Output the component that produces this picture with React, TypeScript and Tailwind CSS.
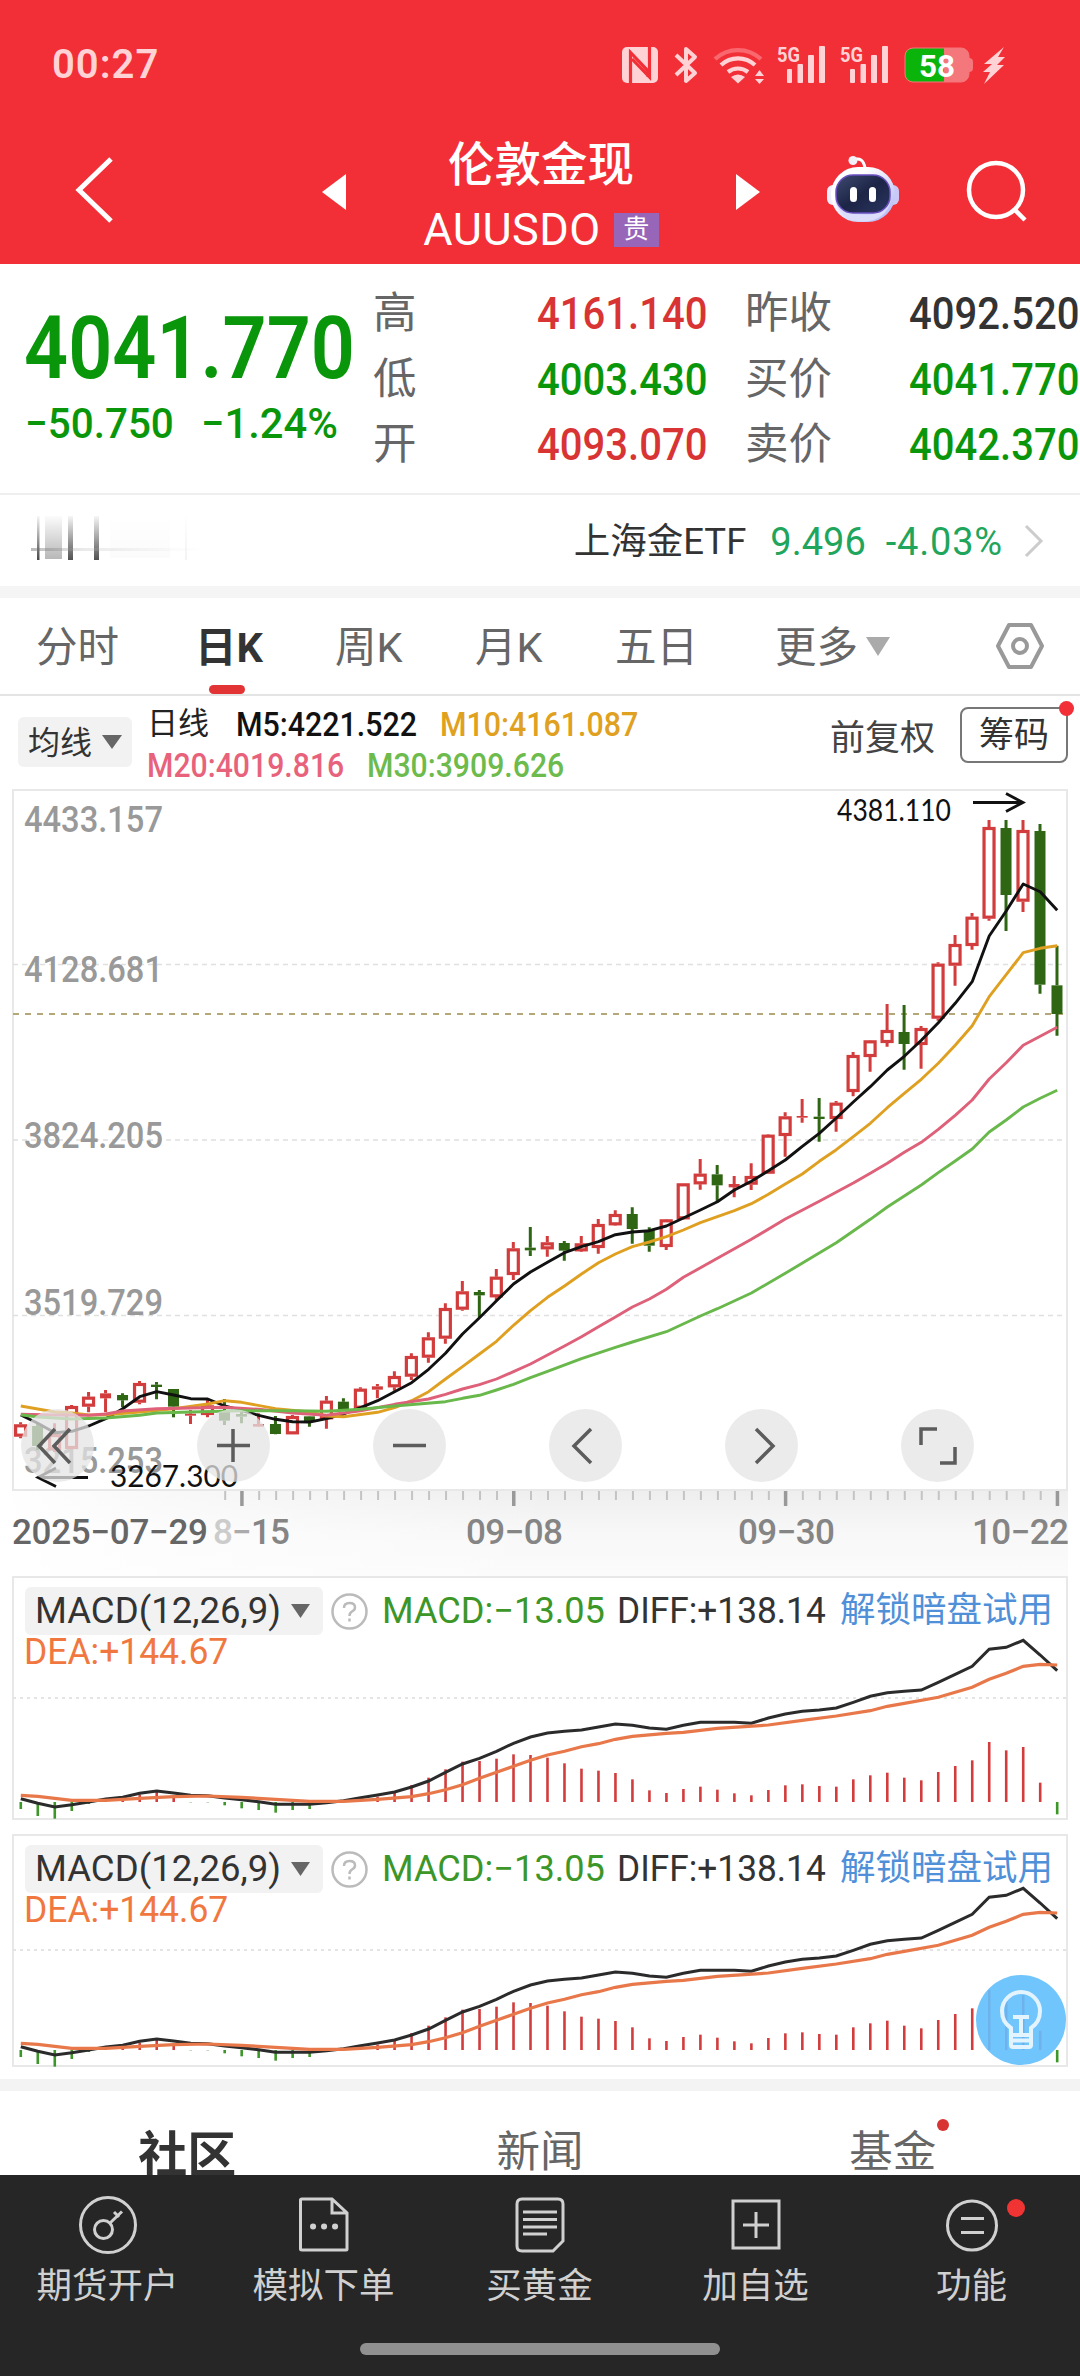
import React from "react";

type Candle = [string, number, number, number, number];

// direction, high, body top, body bottom, low (3 units = 1px)
const candles: Candle[] = [
  ["r", 1927, 1933, 1970, 1975],
  ["g", 1932, 1938, 1998, 2010],
  ["r", 1930, 1962, 2010, 2016],
  ["r", 1875, 1878, 2007, 2008],
  ["r", 1836, 1850, 1880, 1897],
  ["r", 1830, 1840, 1855, 1897],
  ["g", 1840, 1845, 1861, 1882],
  ["r", 1803, 1809, 1868, 1873],
  ["g", 1806, 1814, 1821, 1858],
  ["g", 1827, 1827, 1880, 1912],
  ["r", 1890, 1901, 1907, 1932],
  ["r", 1855, 1876, 1905, 1912],
  ["g", 1857, 1890, 1922, 1935],
  ["g", 1890, 1902, 1910, 1930],
  ["r", 1900, 1932, 1940, 1941],
  ["g", 1908, 1932, 1962, 1963],
  ["r", 1905, 1908, 1963, 1963],
  ["g", 1908, 1909, 1923, 1940],
  ["r", 1848, 1862, 1918, 1946],
  ["g", 1855, 1865, 1890, 1891],
  ["r", 1822, 1826, 1886, 1890],
  ["r", 1812, 1819, 1829, 1855],
  ["r", 1774, 1788, 1822, 1832],
  ["r", 1720, 1728, 1790, 1800],
  ["r", 1657, 1672, 1733, 1748],
  ["r", 1570, 1584, 1676, 1691],
  ["r", 1503, 1534, 1589, 1592],
  ["g", 1530, 1536, 1546, 1612],
  ["r", 1467, 1490, 1552, 1562],
  ["r", 1386, 1405, 1485, 1500],
  ["g", 1341, 1403, 1411, 1428],
  ["r", 1368, 1387, 1408, 1430],
  ["g", 1383, 1389, 1412, 1442],
  ["r", 1368, 1390, 1414, 1416],
  ["r", 1317, 1332, 1404, 1421],
  ["r", 1291, 1302, 1336, 1337],
  ["g", 1282, 1302, 1347, 1391],
  ["g", 1342, 1350, 1397, 1415],
  ["r", 1317, 1318, 1401, 1410],
  ["r", 1210, 1210, 1318, 1319],
  ["r", 1137, 1181, 1213, 1229],
  ["g", 1155, 1183, 1216, 1264],
  ["r", 1188, 1212, 1222, 1252],
  ["r", 1150, 1188, 1214, 1230],
  ["r", 1063, 1064, 1181, 1182],
  ["r", 997, 1009, 1068, 1130],
  ["r", 957, 1008, 1013, 1028],
  ["g", 954, 1010, 1017, 1085],
  ["r", 963, 968, 1017, 1055],
  ["r", 816, 825, 936, 949],
  ["r", 780, 781, 831, 875],
  ["r", 672, 750, 789, 800],
  ["g", 675, 756, 792, 869],
  ["r", 738, 744, 795, 866],
  ["r", 547, 551, 716, 722],
  ["r", 465, 492, 557, 617],
  ["r", 399, 410, 498, 509],
  ["r", 120, 141, 416, 422],
  ["g", 120, 144, 345, 453],
  ["r", 120, 150, 365, 396],
  ["g", 132, 153, 614, 641],
  ["g", 497, 616, 702, 767],
];

type Point = [number, number];

const ma5: Point[] = [[0, 1905], [1, 1930], [2, 1958], [3, 1954], [4, 1938], [5, 1916], [6, 1886], [7, 1850], [8, 1835], [9, 1845], [10, 1856], [11, 1857], [12, 1878], [13, 1892], [14, 1906], [15, 1918], [16, 1925], [17, 1926], [18, 1916], [19, 1902], [20, 1883], [21, 1862], [22, 1835], [23, 1808], [24, 1768], [25, 1720], [26, 1662], [27, 1613], [28, 1562], [29, 1512], [30, 1476], [31, 1447], [32, 1418], [33, 1400], [34, 1385], [35, 1364], [36, 1356], [37, 1352], [38, 1338], [39, 1314], [40, 1290], [41, 1265], [42, 1230], [43, 1204], [44, 1172], [45, 1140], [46, 1099], [47, 1060], [48, 1014], [49, 966], [50, 920], [51, 870], [52, 829], [53, 781], [54, 728], [55, 670], [56, 605], [57, 468], [58, 393], [59, 312], [60, 335], [61, 391]];
const ma10: Point[] = [[0, 1878], [1, 1887], [2, 1896], [3, 1899], [4, 1905], [5, 1904], [7, 1896], [9, 1886], [11, 1872], [12, 1862], [13, 1867], [15, 1886], [17, 1896], [18, 1908], [19, 1910], [21, 1897], [22, 1883], [23, 1862], [24, 1835], [25, 1797], [26, 1760], [27, 1722], [28, 1684], [29, 1636], [30, 1592], [31, 1552], [32, 1518], [33, 1482], [34, 1448], [35, 1422], [36, 1400], [37, 1386], [38, 1370], [39, 1350], [40, 1328], [41, 1310], [42, 1292], [43, 1271], [44, 1243], [45, 1212], [46, 1182], [47, 1144], [48, 1109], [49, 1070], [50, 1030], [51, 983], [52, 940], [53, 898], [54, 850], [55, 796], [56, 737], [57, 650], [58, 584], [59, 518], [60, 505], [61, 497]];
const ma20: Point[] = [[0, 1903], [2, 1905], [4, 1906], [5, 1902], [6, 1893], [8, 1886], [10, 1884], [12, 1882], [14, 1888], [16, 1899], [18, 1906], [20, 1892], [22, 1873], [24, 1857], [25, 1843], [26, 1827], [27, 1814], [28, 1797], [29, 1775], [30, 1752], [31, 1725], [32, 1698], [33, 1670], [34, 1640], [35, 1611], [36, 1581], [37, 1557], [38, 1528], [39, 1492], [41, 1435], [43, 1378], [45, 1317], [47, 1264], [49, 1209], [50, 1180], [51, 1150], [52, 1117], [53, 1087], [54, 1048], [55, 1006], [56, 960], [57, 897], [58, 848], [59, 796], [60, 769], [61, 742]];
const ma30: Point[] = [[0, 1904], [1, 1911], [3, 1917], [5, 1914], [7, 1906], [8, 1899], [10, 1896], [13, 1892], [16, 1892], [18, 1894], [20, 1888], [22, 1878], [25, 1865], [26, 1855], [27, 1846], [28, 1830], [29, 1813], [30, 1793], [31, 1774], [33, 1736], [35, 1702], [36, 1686], [38, 1655], [40, 1608], [41, 1586], [43, 1539], [45, 1480], [48, 1388], [50, 1318], [51, 1281], [53, 1215], [54, 1178], [55, 1143], [56, 1107], [57, 1056], [58, 1020], [59, 981], [60, 955], [61, 931]];

// MACD values measured up from the zero line
const macdBars = [-21, -42, -50, -27, -6, 6, 8, 22, 30, 15, -1, -1, -10, -19, -24, -32, -24, -21, -5, 2, 9, 16, 30, 51, 73, 98, 121, 123, 130, 143, 141, 133, 116, 100, 94, 87, 68, 35, 27, 39, 46, 37, 26, 20, 36, 50, 53, 48, 46, 68, 80, 88, 73, 65, 90, 108, 125, 180, 155, 165, 58, -37];
const diff: Point[] = [[0, 10], [1, -4], [2, -15], [3, -8], [4, 0], [5, 9], [6, 14], [7, 26], [8, 33], [9, 27], [10, 20], [11, 19], [12, 12], [13, 7], [14, 1], [15, -7], [17, -7], [18, -2], [19, 4], [20, 13], [21, 21], [22, 30], [23, 45], [24, 63], [25, 89], [26, 114], [27, 131], [28, 152], [29, 176], [30, 195], [31, 207], [32, 212], [33, 216], [34, 225], [35, 234], [36, 230], [37, 222], [38, 218], [39, 230], [40, 239], [42, 239], [43, 236], [44, 252], [45, 264], [46, 272], [47, 276], [48, 282], [49, 299], [50, 317], [51, 328], [52, 332], [53, 336], [54, 359], [55, 383], [56, 407], [57, 458], [58, 464], [59, 485], [60, 441], [61, 394]];
const dea: Point[] = [[0, 20], [1, 17], [2, 11], [3, 5], [5, 5], [7, 11], [9, 16], [11, 18], [13, 14], [15, 8], [17, 2], [19, 2], [21, 8], [23, 16], [24, 25], [25, 37], [26, 52], [27, 71], [28, 89], [29, 107], [30, 125], [31, 141], [32, 152], [33, 166], [34, 175], [35, 188], [36, 197], [38, 206], [39, 209], [41, 221], [44, 231], [46, 245], [48, 258], [50, 274], [51, 287], [52, 296], [54, 314], [56, 344], [57, 368], [58, 386], [59, 407], [60, 413], [61, 411]];

const px = (i: number) => 20.8 + i * 16.99;
const line = (points: Point[]) =>
  points.map(([i, v]) => `${px(i).toFixed(1)},${(v / 3).toFixed(1)}`).join(" ");
const macdLine = (points: Point[], zero: number) =>
  points
    .map(([i, v]) => `${px(i).toFixed(1)},${(zero - v / 3).toFixed(1)}`)
    .join(" ");

const Signal = () => (
  <svg className="h-[40px] w-[50px] overflow-visible" viewBox="0 0 50 40" fill="#ffd3d5">
    <text x="0" y="16.500" fontSize="20" fontWeight="700" textLength="23" lengthAdjust="spacingAndGlyphs">
      5G
    </text>
    <rect x="10" y="24" width="5" height="14" rx="1" />
    <rect x="20.5" y="19" width="5.5" height="19" rx="1" />
    <rect x="31" y="10" width="6" height="28" rx="1" />
    <rect x="42" y="1" width="6" height="37" rx="1" />
  </svg>
);

const StatusBar = () => (
  <div className="flex h-[128px] items-center justify-between pt-px pr-[74px] pl-[52px]">
    <span className="text-[40px] font-semibold tracking-[1px] text-[#ffd3d5]">
      00:27
    </span>
    <div className="flex items-center">
      <svg className="mr-[14px] h-[38px] w-[38px]" viewBox="0 0 38 38">
        <rect x="1" y="1" width="36" height="36" rx="5" fill="#ffd3d5" />
        <path d="M9.500 37V6.500L27 25V31M28.500 1V31L11 13" fill="none" stroke="#f22f37" strokeWidth="3.200" />
      </svg>
      <svg className="mr-[14px] h-[38px] w-[26px]" viewBox="0 0 26 38" fill="none" stroke="#ffd3d5" strokeWidth="4">
        <path d="M3 9L22 27L13 35V3L22 11L3 29" strokeLinejoin="round" />
      </svg>
      <svg className="mr-[12px] h-[38px] w-[52px]" viewBox="0 0 52 38" fill="none" strokeWidth="4.200">
        <path d="M2 13A34 34 0 0 1 48 13" stroke="#f9686e" />
        <path d="M8 19A25 25 0 0 1 42 19M15 26A16 16 0 0 1 35 26" stroke="#ffd3d5" />
        <path d="M18 31Q25 26 32 31L25 37.500ZM42 30L46.500 24L51 30ZM42 33L46.500 38L51 33Z" fill="#ffd3d5" />
      </svg>
      <div className="mr-[13px]"><Signal /></div>
      <div className="mr-[14px]"><Signal /></div>
      <svg className="mr-[8px] h-[38px] w-[70px]" viewBox="0 0 70 38">
        <rect x="1" y="2" width="64" height="34" rx="8" fill="#f4777c" />
        <path d="M9 2H40V36H9Q1 36 1 28V10Q1 2 9 2Z" fill="#0ab40a" />
        <rect x="1" y="2" width="64" height="34" rx="8" fill="none" stroke="#f4777c" />
        <path d="M65 12Q69 12 69 16V22Q69 26 65 26Z" fill="#f4777c" />
        <text x="15" y="30.500" fontSize="32" fontWeight="700" fill="#fff" textLength="36" lengthAdjust="spacingAndGlyphs">
          58
        </text>
      </svg>
      <svg className="h-[38px] w-[24px]" viewBox="0 0 24 38" fill="#ffd3d5">
        <path d="M22 1L2 18H10L1 26H8L2 38L22 19H15L23 11H16Z" />
      </svg>
    </div>
  </div>
);

const Robot = () => (
  <svg className="h-[68px] w-[74px]" viewBox="0 0 74 68">
    <defs>
      <linearGradient id="shell" x1="0" y1="0" x2="1" y2="1">
        <stop offset="0.300" stopColor="#ffffff" />
        <stop offset="1" stopColor="#a9b0f5" />
      </linearGradient>
      <linearGradient id="face" x1="0" y1="0" x2="1" y2="1">
        <stop offset="0" stopColor="#3f4a70" />
        <stop offset="0.500" stopColor="#1c2546" />
        <stop offset="1" stopColor="#2b3560" />
      </linearGradient>
    </defs>
    <path d="M27 5Q37 1 39 13" fill="none" stroke="#fff" strokeWidth="3" />
    <circle cx="27" cy="5.500" r="4.500" fill="#f3f0f8" />
    <rect x="1" y="30" width="12" height="20" rx="6" fill="#f1eefc" />
    <rect x="61" y="30" width="12" height="20" rx="6" fill="#c9c8f7" />
    <rect x="5" y="12" width="64" height="55" rx="27" fill="url(#shell)" />
    <path d="M9 45Q14 66 37 66.500Q60 66 65 45Q58 60 37 60Q16 60 9 45Z" fill="#dcdcfb" />
    <rect x="10" y="20" width="54" height="38" rx="17" fill="url(#face)" stroke="#6a4fc0" strokeWidth="1.500" />
    <rect x="24" y="32" width="7" height="15" rx="3.500" fill="#fff" />
    <rect x="43" y="32" width="7" height="15" rx="3.500" fill="#fff" />
  </svg>
);

const Header = () => (
  <div className="flex h-[136px] items-start text-white">
    <svg className="mt-[28px] ml-[74px] h-[68px] w-[40px]" viewBox="0 0 40 68" fill="none" stroke="#fff" strokeWidth="5">
      <path d="M37 3L5 34L37 65" />
    </svg>
    <svg className="mt-[45px] ml-[207px] h-[38px] w-[26px]" viewBox="0 0 26 38" fill="#fff">
      <path d="M25 1V37L1 19Z" />
    </svg>
    <div className="flex w-[388px] flex-col items-center">
      <div className="mt-[5px] h-[64px] text-[46.500px] leading-[64px] font-medium">
        伦敦金现
      </div>
      <div className="flex h-[64px] items-center pt-[1px]">
        <span className="text-[45px] tracking-[0.500px]">AUUSDO</span>
        <span className="ml-[13px] flex h-[34px] w-[45px] items-center justify-center bg-[#9866b8] text-[26px]">
          贵
        </span>
      </div>
    </div>
    <svg className="mt-[45px] h-[38px] w-[26px]" viewBox="0 0 26 38" fill="#fff">
      <path d="M1 1V37L25 19Z" />
    </svg>
    <div className="mt-[27px] ml-[65px]"><Robot /></div>
    <svg className="mt-[32px] ml-[66px] h-[62px] w-[62px]" viewBox="0 0 62 62" fill="none" stroke="#fff" strokeWidth="4.500">
      <circle cx="30" cy="30" r="27" />
      <path d="M48 49L59 60" />
    </svg>
  </div>
);

const quoteRows = [
  ["高", "4161.140", "text-[#d93434]", "昨收", "4092.520", "text-[#333]"],
  ["低", "4003.430", "text-[#0a960a]", "买价", "4041.770", "text-[#0a960a]"],
  ["开", "4093.070", "text-[#d93434]", "卖价", "4042.370", "text-[#0a960a]"],
];

const Quotes = () => (
  <div className="flex h-[231px] border-b-2 border-[#eee]">
    <div className="w-[373px] pl-[24px] text-[#0a960a]">
      <div className="mt-[32px] h-[102px] w-max origin-left scale-x-[0.878] text-[88px] leading-[104px] font-semibold">
        4041.770
      </div>
      <div className="flex h-[50px] items-center text-[43px] font-medium">
        <span className="w-[177px] pl-[1px]">
          <span className="inline-block origin-left scale-x-[0.94]">−50.750</span>
        </span>
        <span className="inline-block origin-left scale-x-[0.97]">−1.24%</span>
      </div>
    </div>
    <div className="flex flex-1 flex-col pt-[17px]">
      {quoteRows.map((row) => (
        <div key={row[0]} className="flex h-[65.500px] items-center">
          <span className="w-[100px] text-[43.500px] text-[#666]">{row[0]}</span>
          <span className={`w-[235px] text-right text-[45px] font-medium ${row[2]}`}>
            <span className="inline-block origin-right scale-x-[0.89]">{row[1]}</span>
          </span>
          <span className="ml-[37px] w-[100px] text-[43.500px] text-[#666]">{row[3]}</span>
          <span className={`w-[235px] text-right text-[45px] font-medium ${row[5]}`}>
            <span className="inline-block origin-right scale-x-[0.89]">{row[4]}</span>
          </span>
        </div>
      ))}
    </div>
  </div>
);

const EtfRow = () => (
  <div className="flex h-[91px] items-center justify-between pr-[36px] pl-[30px]">
    <svg className="mt-[-5px] h-[44px] w-[180px]" viewBox="0 0 180 44">
      <defs>
        <linearGradient id="bar" x1="0" y1="0" x2="0" y2="1">
          <stop offset="0" stopColor="#333" stopOpacity="0.050" />
          <stop offset="1" stopColor="#333" />
        </linearGradient>
        <linearGradient id="fade" x1="0" y1="0" x2="1" y2="0">
          <stop offset="0" stopColor="#666" stopOpacity="0.450" />
          <stop offset="0.300" stopColor="#aaa" stopOpacity="0.250" />
          <stop offset="1" stopColor="#ccc" stopOpacity="0" />
        </linearGradient>
      </defs>
      <rect x="7" width="2.500" height="44" fill="url(#bar)" opacity="0.900" />
      <rect x="15" width="17" height="43" fill="url(#bar)" opacity="0.350" />
      <rect x="38" width="5" height="44" fill="url(#bar)" opacity="0.850" />
      <rect x="64" width="5" height="44" fill="url(#bar)" opacity="0.850" />
      <rect x="1" y="32" width="176" height="3" fill="url(#fade)" />
      <rect x="80" width="60" height="42" fill="url(#bar)" opacity="0.020" />
      <rect x="155" width="2" height="44" fill="url(#bar)" opacity="0.060" />
    </svg>
    <div className="flex items-center">
      <span className="pt-[3px] text-[36.500px] text-[#333]">上海金ETF</span>
      <span className="ml-[24px] pt-[3px] text-[38px] text-[#1fa55c]">9.496</span>
      <span className="ml-[20px] pt-[3px] text-[38px] tracking-[0.800px] text-[#1fa55c]">-4.03%</span>
      <svg className="ml-[21px] h-[34px] w-[20px]" viewBox="0 0 20 34" fill="none" stroke="#ccc" strokeWidth="3">
        <path d="M2 2L17 17L2 32" />
      </svg>
    </div>
  </div>
);

const Tabs = () => (
  <div className="flex h-[98px] items-center border-b-2 border-[#e4e4e4] text-[41.500px] text-[#666]">
    <span className="ml-[36px] w-[159px] pt-[5px]">分时</span>
    <span className="relative flex h-full w-[140px] items-center pt-[5px] font-bold text-[#333]">
      日K
      <span className="absolute bottom-0 left-[14px] h-[9px] w-[36px] rounded-full bg-[#e23434]" />
    </span>
    <span className="w-[140px] pt-[5px]">周K</span>
    <span className="w-[140px] pt-[5px]">月K</span>
    <span className="w-[160px] pt-[5px]">五日</span>
    <span className="pt-[5px]">更多</span>
    <svg className="ml-[8px] h-[20px] w-[24px]" viewBox="0 0 24 20" fill="#aaa">
      <path d="M0 1H24L12 20Z" />
    </svg>
    <svg className="mr-[35px] ml-auto h-[48px] w-[50px]" viewBox="0 0 50 48" fill="none" stroke="#999" strokeWidth="4">
      <path d="M14 3H36L47 24L36 45H14L3 24Z" strokeLinejoin="round" />
      <circle cx="25" cy="24" r="7" />
    </svg>
  </div>
);

const Legend = () => (
  <div className="flex h-[84px]">
    <div className="mt-[21px] ml-[18px] flex h-[50px] w-[114px] items-center rounded-md bg-[#f2f2f2] pl-[10px] text-[32px] text-[#333]">
      <span className="pt-[2px]">均线</span>
      <svg className="ml-[10px] h-[14px] w-[20px]" viewBox="0 0 20 14" fill="#666">
        <path d="M0 0H20L10 14Z" />
      </svg>
    </div>
    <div className="ml-[15px] w-[560px] pt-[8px] text-[33px] font-medium">
      <div className="flex h-[41px] items-center">
        <span className="w-[89px] text-[31px] font-normal text-[#222]">日线</span>
        <span className="w-[204px] text-[#111]">
          <span className="inline-block origin-left scale-x-[0.92]">M5:4221.522</span>
        </span>
        <span className="text-[#e0a020]">
          <span className="inline-block origin-left scale-x-[0.92]">M10:4161.087</span>
        </span>
      </div>
      <div className="flex h-[41px] items-center">
        <span className="w-[220px] text-[#e8627c]">
          <span className="inline-block origin-left scale-x-[0.915]">M20:4019.816</span>
        </span>
        <span className="text-[#6cbb4c]">
          <span className="inline-block origin-left scale-x-[0.915]">M30:3909.626</span>
        </span>
      </div>
    </div>
    <span className="mt-[17px] ml-auto text-[35px] text-[#444]">前复权</span>
    <div className="relative mt-[11px] mr-[12px] ml-[25px] flex h-[56px] w-[108px] items-center justify-center rounded-lg border-2 border-[#777] pt-[3px] text-[35px] text-[#333]">
      筹码
      <span className="absolute -top-[8px] -right-[8px] size-[15px] rounded-full bg-[#f22f37]" />
    </div>
  </div>
);

const axisLabels: [string, number][] = [
  ["4433.157", 52],
  ["4128.681", 202],
  ["3824.205", 368],
  ["3519.729", 535],
  ["3215.253", 693],
];

const chartButtons = [
  "M34 20L18 37L34 54M49 20L33 37L49 54",
  "M36 20V53M20 36.5H53",
  "M20 36.500H53",
  "M42 20L25 37L42 54",
  "M31 20L48 37L31 54",
  "M20 36V20H36M39 54H54V38",
];

const KChart = () => (
  <div className="relative">
    <svg className="h-[796px] w-[1080px]" viewBox="0 0 1080 796">
      <defs>
        <linearGradient id="axisV" x1="0" y1="0" x2="0" y2="1">
          <stop offset="0" stopColor="#eeeeee" />
          <stop offset="0.500" stopColor="#f8f8f8" />
          <stop offset="1" stopColor="#fbfbfb" />
        </linearGradient>
        <linearGradient id="axisH" x1="0" y1="0" x2="1" y2="0">
          <stop offset="0" stopColor="#fff" />
          <stop offset="0.300" stopColor="#fff" stopOpacity="0.600" />
          <stop offset="1" stopColor="#fff" stopOpacity="0" />
        </linearGradient>
      </defs>
      <rect x="0" y="711" width="1068" height="85" fill="url(#axisV)" />
      <rect x="0" y="711" width="560" height="85" fill="url(#axisH)" />
      <rect x="13" y="10" width="1054" height="700" fill="#fff" stroke="#e8e8e8" strokeWidth="2" />
      <path d="M13 184.500H1066M13 360H1066M13 535.500H1066" stroke="#e0e0e0" strokeWidth="1.300" strokeDasharray="5 4" />
      <path d="M13 234H1066" stroke="#b5a878" strokeWidth="2" strokeDasharray="6 6" />
      <g fontSize="36" fontWeight="500" fill="#999">
        {axisLabels.map(([label, y]) => (
          <text key={label} x="24" y={y} textLength="139" lengthAdjust="spacingAndGlyphs">
            {label}
          </text>
        ))}
      </g>
      {candles.map(([dir, high, top, bottom, low], i) => {
        const x = px(i) - 0.2;
        const color = dir === "r" ? "#d23c3c" : "#2f6614";
        const height = (bottom - top) / 3;
        return (
          <g key={i} stroke={color} strokeWidth="3">
            <path d={`M${x} ${high / 3}V${top / 3}M${x} ${bottom / 3}V${low / 3}`} />
            {dir === "g" || height < 6 ? (
              <rect x={x - 5.500} y={top / 3} width="11" height={height} fill={color} stroke="none" />
            ) : (
              <rect x={x - 5} y={top / 3 + 1.500} width="10" height={height - 3} fill="#fff" strokeWidth="3.200" />
            )}
          </g>
        );
      })}
      <g fill="none" strokeWidth="2.900" strokeLinejoin="round">
        <polyline points={line(ma5)} stroke="#111" />
        <polyline points={line(ma10)} stroke="#dfa021" />
        <polyline points={line(ma20)} stroke="#de6079" />
        <polyline points={line(ma30)} stroke="#69b84b" />
      </g>
      <g fill="none" stroke="#111" strokeWidth="2.800">
        <path d="M973 22.500H1023M1006 13.500L1023 22.500L1006 31.500" />
        <path d="M88 697.500H38M56 688L38 697.500L56 706.500" />
      </g>
      <g fontSize="30" fill="#111" fontFamily="Lato, sans-serif">
        <text x="837" y="40.500" textLength="114" lengthAdjust="spacingAndGlyphs">4381.110</text>
        <text x="110" y="707" textLength="128" lengthAdjust="spacingAndGlyphs">3267.300</text>
      </g>
      {Array.from({ length: 50 }, (_, k) => k + 12).map((i) =>
        (i - 13) % 16 === 0 ? (
          <rect key={i} x={px(i) - 1.500} y="711" width="3.500" height="15" fill="#999" />
        ) : (
          <rect key={i} x={px(i) - 0.500} y="711" width="2" height="9" fill="#c4c4c4" />
        ),
      )}
      <g fontSize="35" fontWeight="500" fill="#858585">
        <text x="12" y="764" fill="#666" textLength="196">2025−07−29</text>
        <text x="213" y="764" textLength="77"><tspan fill="#ccc">8</tspan><tspan fill="#aaa">−</tspan>15</text>
        <text x="466" y="764" textLength="97">09−08</text>
        <text x="738" y="764" textLength="97">09−30</text>
        <text x="972" y="764" textLength="97">10−22</text>
      </g>
    </svg>
    <div className="absolute top-[629px] left-[21px] flex gap-[103px]">
      {chartButtons.map((d) => (
        <button key={d} className="size-[73px] rounded-full bg-[#e4e4e4]/75">
          <svg className="size-[73px]" viewBox="0 0 73 73" fill="none" stroke="#5c5c5c" strokeWidth="3.500">
            <path d={d} />
          </svg>
        </button>
      ))}
    </div>
  </div>
);

interface MacdProps {
  zero: number;
  mid: number;
  className: string;
}

const MacdPanel = ({ zero, mid, className }: MacdProps) => (
  <div className={`relative mx-[12px] border-2 border-[#e8e8e8] ${className}`}>
    <svg className="absolute -top-[2px] -left-[14px] h-full w-[1080px] overflow-visible" viewBox="0 0 1080 242" preserveAspectRatio="xMinYMin slice">
      <path d={`M13 ${mid}H1066`} stroke="#e4e4e4" strokeWidth="2" strokeDasharray="3 4" />
      {macdBars.map((v, i) => (
        <path key={i} d={`M${px(i)} ${zero}V${zero - v / 3}`} stroke={v > 0 ? "#d23c3c" : "#3c9628"} strokeWidth="2.600" />
      ))}
      <polyline points={macdLine(diff, zero)} fill="none" stroke="#2b2b2b" strokeWidth="3" />
      <polyline points={macdLine(dea, zero)} fill="none" stroke="#e8784a" strokeWidth="3.200" />
    </svg>
    <div className="relative flex h-[58px] items-center pt-[8px] pl-[11px] text-[36px]">
      <div className="flex h-[48px] w-[298px] items-center rounded-md bg-[#f2f2f2] pl-[10px] text-[#333]">
        <span className="w-[256px]">
          <span className="inline-block origin-left scale-x-[1.015]">MACD(12,26,9)</span>
        </span>
        <svg className="h-[14px] w-[19px]" viewBox="0 0 19 14" fill="#666">
          <path d="M0 0H19L9.500 14Z" />
        </svg>
      </div>
      <svg className="ml-[8px] size-[37px]" viewBox="0 0 37 37" fill="none" stroke="#bbb" strokeWidth="2.500">
        <circle cx="18.500" cy="18.500" r="17" />
        <path d="M13 15Q13 10 18.500 10Q24 10 24 14.500Q24 17 21 18.500Q18.500 20 18.500 23M18.500 25.500V28.500" />
      </svg>
      <span className="ml-[14px] w-[235px] text-[#3c9628]">
        <span className="inline-block origin-left scale-x-[1.005]">MACD:−13.05</span>
      </span>
      <span className="w-[223px] text-[#333]">
        <span className="inline-block origin-left scale-x-[0.98]">DIFF:+138.14</span>
      </span>
      <span className="text-[35.500px] whitespace-nowrap text-[#5090d8]">解锁暗盘试用</span>
    </div>
    <div className="relative mt-[-3px] ml-[10px] h-[38px] w-max origin-left scale-x-[0.985] text-[36px] leading-[38px] text-[#f07840]">
      DEA:+144.67
    </div>
  </div>
);

const BottomTabs = () => (
  <div className="grid h-[84px] grid-cols-3 overflow-hidden px-[11px] text-center text-[#666]">
    <span className="mt-[27px] h-[57px] text-[49px] leading-[76px] font-bold text-[#333]">社区</span>
    <span className="mt-[30px] text-[43.500px] leading-[64px]">新闻</span>
    <span className="mt-[30px] text-[43.500px] leading-[64px]">
      <span className="relative">
        基金
        <span className="absolute -top-[8px] -right-[13px] size-[12px] rounded-full bg-[#d93434]" />
      </span>
    </span>
  </div>
);

const navItems = [
  {
    label: "期货开户",
    icon: (
      <>
        <circle cx="30" cy="30" r="27.500" />
        <circle cx="25.500" cy="34.500" r="9" />
        <path d="M32 28L44 16.500M36 17L41 22" />
      </>
    ),
  },
  {
    label: "模拟下单",
    icon: (
      <>
        <path d="M8 4H38L53 18V54Q53 55 52 55H8Q6.500 55 6.500 54V5Q6.500 4 8 4ZM38 4V18H53" />
        <path d="M19 31.500H19.100M30 31.500H30.100M41 31.500H41.100" strokeWidth="6" strokeLinecap="round" />
      </>
    ),
  },
  {
    label: "买黄金",
    icon: (
      <>
        <path d="M12 4H48Q53 4 53 9V46L43 56H12Q7 56 7 51V9Q7 4 12 4Z" />
        <path d="M13 17H47M13 24.500H47M13 32H47M13 39H37" />
      </>
    ),
  },
  {
    label: "加自选",
    icon: (
      <>
        <rect x="7" y="6" width="46" height="47" />
        <path d="M30 17V43M17 30H43" />
      </>
    ),
  },
  {
    label: "功能",
    icon: (
      <>
        <circle cx="30" cy="30.500" r="24.500" />
        <path d="M19 23.500H42M19 37.500H42" />
      </>
    ),
    dot: true,
  },
];

const BottomNav = () => (
  <div className="h-[201px] bg-[#262626] text-[#d0d0d0]">
    <div className="flex pt-[20px]">
      {navItems.map((item) => (
        <div key={item.label} className="flex w-[216px] flex-col items-center pr-[1px]">
          <div className="relative">
            <svg className="size-[60px]" viewBox="0 0 60 60" fill="none" stroke="#d0d0d0" strokeWidth="3">
              {item.icon}
            </svg>
            {item.dot && (
              <span className="absolute top-[4px] -right-[23px] size-[18px] rounded-full bg-[#f03434]" />
            )}
          </div>
          <span className="mt-[6px] text-[35.500px] leading-[50px]">{item.label}</span>
        </div>
      ))}
    </div>
    <div className="mx-auto mt-[32px] h-[12px] w-[360px] rounded-full bg-[#909090]" />
  </div>
);

function App() {
  return (
    <div className="relative h-[2376px] w-[1080px] overflow-hidden bg-white font-[Roboto,'Noto_Sans_CJK_SC',sans-serif]">
      <div className="h-[264px] bg-[#f22f37]">
        <StatusBar />
        <Header />
      </div>
      <Quotes />
      <EtfRow />
      <div className="h-[12px] bg-[#f5f5f5]" />
      <Tabs />
      <Legend />
      <KChart />
      <MacdPanel zero={226} mid={122} className="h-[244px]" />
      <MacdPanel zero={216} mid={116} className="mt-[14px] h-[233px]" />
      <div className="mt-[12px] h-[12px] bg-[#f3f3f3]" />
      <BottomTabs />
      <BottomNav />
      <button className="absolute top-[1975px] left-[976px] flex size-[90px] items-center justify-center rounded-full bg-[#62bffd]/90">
        <svg className="h-[62px] w-[46px]" viewBox="0 0 46 62" fill="none" stroke="#e4f4ff" strokeWidth="4">
          <path d="M13 46V39Q4 33 4 22A19 19 0 0 1 42 22Q42 33 33 39V46M13 46H33M13 51.500H33M13 46V56Q13 58 15 58H31Q33 58 33 56V46M15 28H31M23 28V46" />
        </svg>
      </button>
    </div>
  );
}

export default App;
